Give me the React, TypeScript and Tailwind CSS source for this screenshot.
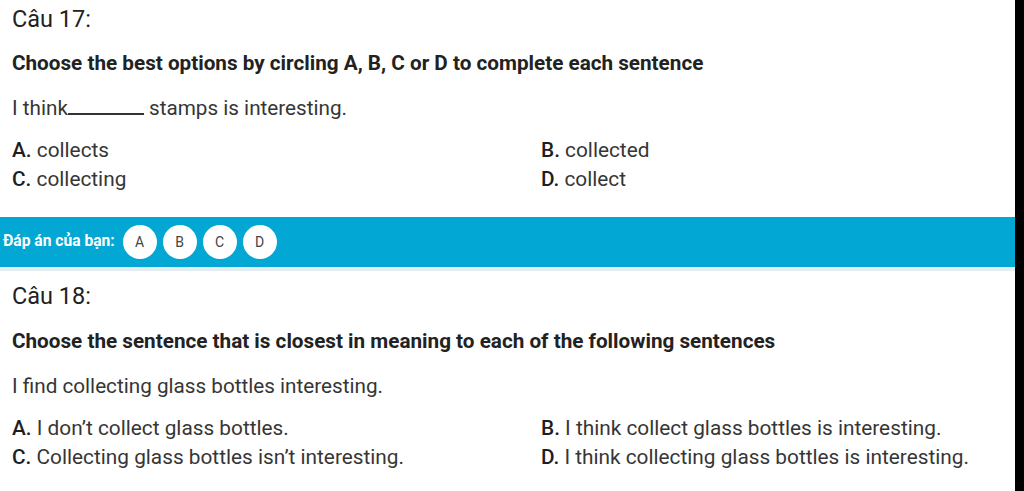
import React from 'react';

type Option = { key: string; text: string };

const Options: React.FC<{ items: Option[] }> = ({ items }) => (
  <div className="grid grid-cols-[529px_1fr] text-[20.8px] leading-[29px] text-[#363636]">
    {items.map((o) => (
      <div key={o.key} className="whitespace-nowrap">
        <span className="text-[#1e1e1e] font-medium">{o.key}.</span> {o.text}
      </div>
    ))}
  </div>
);

const AnswerBar: React.FC = () => (
  <div className="border-b-4 border-[#e2eef2]">
    <div className="h-[50px] bg-[#02a8d3] flex items-center pl-[3px] gap-[8px]">
      <span className="text-white font-bold text-[15.6px]">Đáp án của bạn:</span>
      <div className="flex gap-[6px]">
        {['A', 'B', 'C', 'D'].map((l) => (
          <button
            key={l}
            className="w-[34px] h-[34px] rounded-full bg-white text-[#444] text-[14px] flex items-center justify-center"
          >
            {l}
          </button>
        ))}
      </div>
    </div>
  </div>
);

export default function App() {
  return (
    <div className="flex w-[1024px] h-[491px] overflow-hidden bg-black font-['Roboto',sans-serif]">
      <div className="w-[1015px] bg-white">
        <section className="pl-[12px] pt-[5px]">
          <h2 className="text-[23.5px] leading-[28px] text-[#222]">Câu 17:</h2>
          <p className="mt-[16px] text-[20.7px] leading-[28px] font-bold text-[#222]">
            Choose the best options by circling A, B, C or D to complete each sentence
          </p>
          <p className="mt-[17px] text-[20.7px] leading-[28px] text-[#363636]">
            I think<span className="inline-block w-[76px] border-b-2 border-[#333] align-baseline"></span> stamps is interesting.
          </p>
          <div className="mt-[14px]">
            <Options
              items={[
                { key: 'A', text: 'collects' },
                { key: 'B', text: 'collected' },
                { key: 'C', text: 'collecting' },
                { key: 'D', text: 'collect' },
              ]}
            />
          </div>
        </section>

        <div className="mt-[23px]">
          <AnswerBar />
        </div>

        <section className="pl-[12px] pt-[11px]">
          <h2 className="text-[23.5px] leading-[28px] text-[#222]">Câu 18:</h2>
          <p className="mt-[17px] text-[20.7px] leading-[28px] font-bold text-[#222]">
            Choose the sentence that is closest in meaning to each of the following sentences
          </p>
          <p className="mt-[17px] text-[20.7px] leading-[28px] text-[#363636]">
            I find collecting glass bottles interesting.
          </p>
          <div className="mt-[14px]">
            <Options
              items={[
                { key: 'A', text: 'I don’t collect glass bottles.' },
                { key: 'B', text: 'I think collect glass bottles is interesting.' },
                { key: 'C', text: 'Collecting glass bottles isn’t interesting.' },
                { key: 'D', text: 'I think collecting glass bottles is interesting.' },
              ]}
            />
          </div>
        </section>
      </div>
    </div>
  );
}
